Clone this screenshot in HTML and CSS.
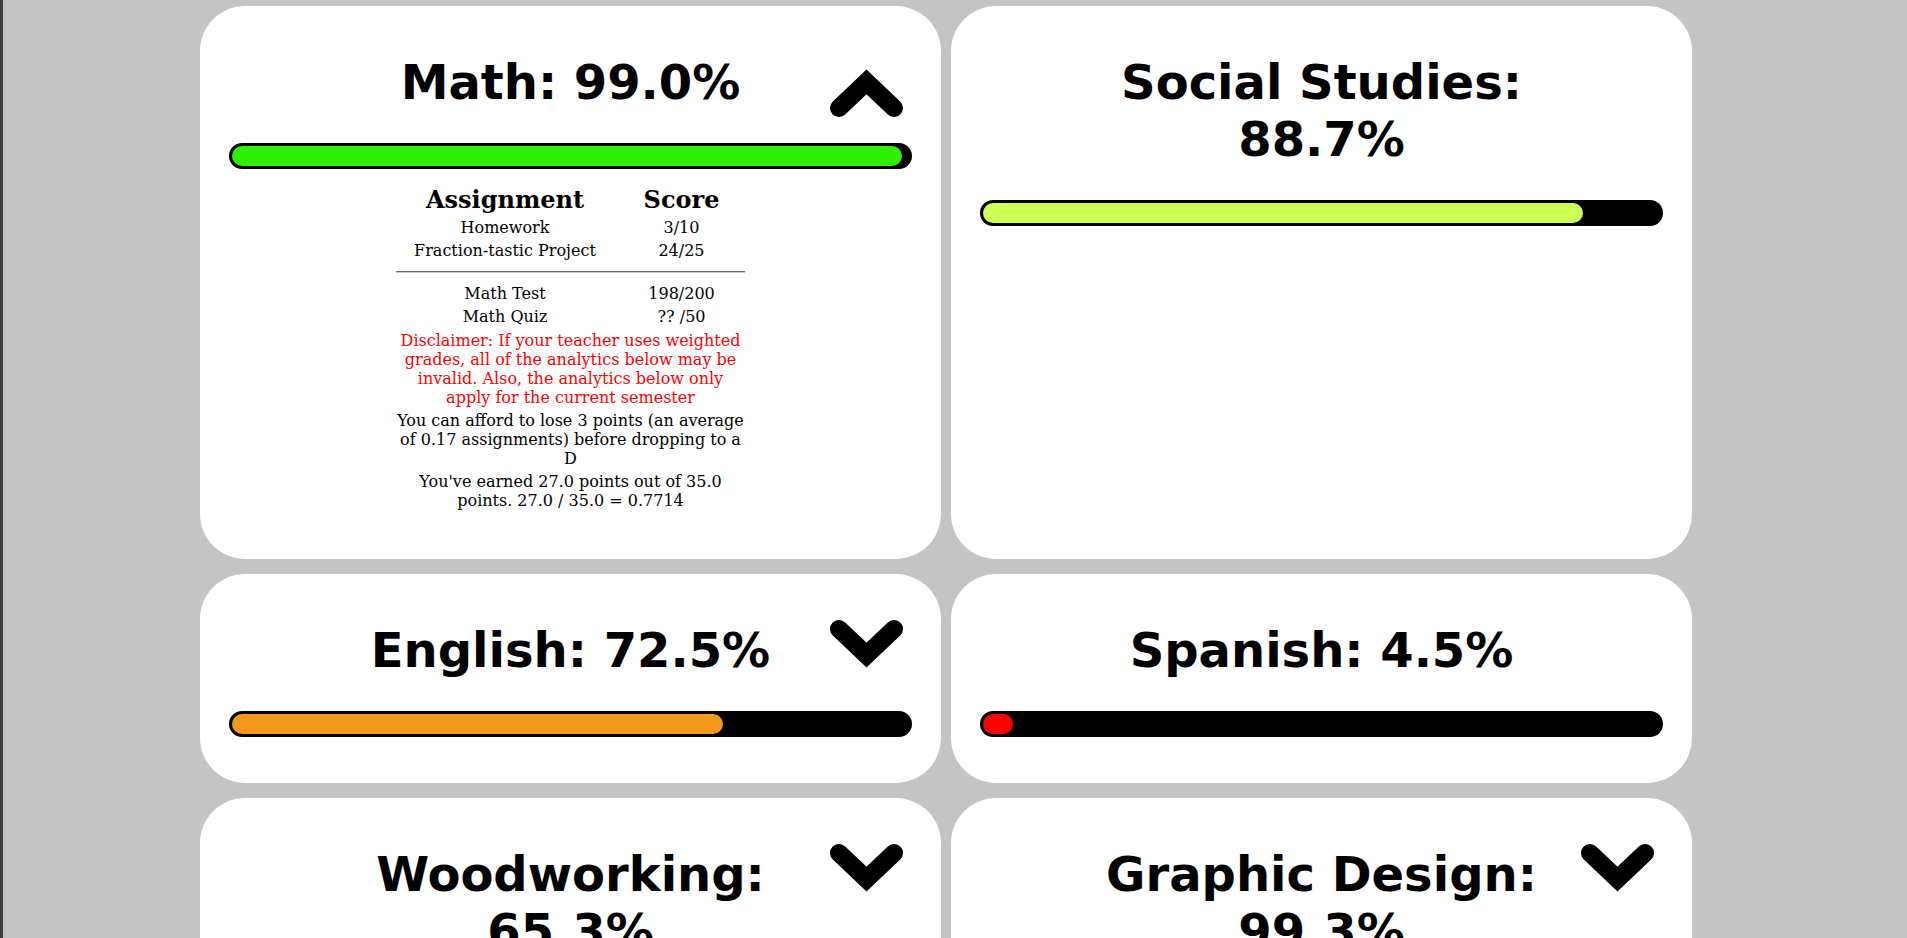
FILE: index.html
```html
<!DOCTYPE html>
<html lang="en">
<head>
<meta charset="utf-8">
<title>Grades</title>
<link rel="stylesheet" href="styles.css">
</head>
<body>
<main class="grid">
  <section class="card">
    <h1 class="title">Math: 99.0%</h1>
    <svg class="chev chev-up" viewBox="0 0 75 48" aria-hidden="true"><polyline points="10,39 37.5,13 65,39"/></svg>
    <div class="bar"><div class="fill" style="width:99%;background:#2ff000"></div></div>
    <div class="details">
      <table class="scores">
        <tr><th class="c1">Assignment</th><th class="c2">Score</th></tr>
        <tr><td>Homework</td><td>3/10</td></tr>
        <tr><td>Fraction-tastic Project</td><td>24/25</td></tr>
      </table>
      <hr class="sep">
      <table class="scores">
        <tr><td class="c1">Math Test</td><td class="c2">198/200</td></tr>
        <tr><td>Math Quiz</td><td>?? /50</td></tr>
      </table>
      <p class="disclaimer">Disclaimer: If your teacher uses weighted grades, all of the analytics below may be invalid. Also, the analytics below only apply for the current semester</p>
      <p class="note">You can afford to lose 3 points (an average of 0.17 assignments) before dropping to a D</p>
      <p class="note">You've earned 27.0 points out of 35.0 points. 27.0 / 35.0 = 0.7714</p>
    </div>
  </section>

  <section class="card">
    <h1 class="title">Social Studies: 88.7%</h1>
    <div class="bar"><div class="fill" style="width:88.7%;background:#ccff55"></div></div>
  </section>

  <section class="card">
    <h1 class="title">English: 72.5%</h1>
    <svg class="chev chev-down" viewBox="0 0 75 48" aria-hidden="true"><polyline points="10,9 37.5,35 65,9"/></svg>
    <div class="bar"><div class="fill" style="width:72.5%;background:#f4991e"></div></div>
  </section>

  <section class="card">
    <h1 class="title">Spanish: 4.5%</h1>
    <div class="bar"><div class="fill" style="width:4.5%;background:#ff0000"></div></div>
  </section>

  <section class="card">
    <h1 class="title">Woodworking: 65.3%</h1>
    <svg class="chev chev-down" viewBox="0 0 75 48" aria-hidden="true"><polyline points="10,9 37.5,35 65,9"/></svg>
    <div class="bar"><div class="fill" style="width:65.3%;background:#f7c12a"></div></div>
  </section>

  <section class="card">
    <h1 class="title">Graphic Design: 99.3%</h1>
    <svg class="chev chev-down" viewBox="0 0 75 48" aria-hidden="true"><polyline points="10,9 37.5,35 65,9"/></svg>
    <div class="bar"><div class="fill" style="width:99.3%;background:#2ff000"></div></div>
  </section>
</main>
</body>
</html>
```

FILE: styles.css
```css
html {
  border-left: 3px solid #3b3f43;
  background: #c4c4c4;
}

body {
  margin: 0;
  background: #c4c4c4;
  font-family: "DejaVu Serif", serif;
  font-size: 16px;
  color: #000;
  overflow: hidden;
}

.grid {
  display: grid;
  grid-template-columns: 741px 741px;
  column-gap: 10px;
  row-gap: 15px;
  margin: 6px 0 0 197px;
}

.card {
  position: relative;
  background: #fff;
  border-radius: 45px;
  padding: 16px 29px 46px;
}

.title {
  margin: 32px 100px;
  font-family: "DejaVu Sans", sans-serif;
  font-weight: bold;
  font-size: 48px;
  line-height: 57px;
  text-align: center;
}

.chev {
  position: absolute;
  right: 37px;
  width: 75px;
  height: 48px;
}

.chev polyline {
  fill: none;
  stroke: #000;
  stroke-width: 18;
  stroke-linecap: round;
  stroke-linejoin: miter;
}

.chev-down {
  top: 46px;
}

.chev-up {
  top: 63px;
}

.bar {
  background: #000;
  border-radius: 13px;
  padding: 3px;
  height: 20px;
}

.fill {
  height: 20px;
  border-radius: 10px;
}

.details {
  width: 355px;
  margin: 13px auto 3px;
  text-align: center;
}

.scores {
  table-layout: fixed;
  width: 355px;
  border-spacing: 2px;
}

.scores th,
.scores td {
  padding: 1px;
  text-align: center;
}

.scores th {
  font-size: 24px;
  font-weight: bold;
}

.c1 {
  width: 218px;
}

.c2 {
  width: 127px;
}

.sep {
  height: 0;
  margin: 8px 3px;
  border: none;
  border-top: 1px solid #6c6c6c;
  border-bottom: 1px solid #c9c9c9;
}

.disclaimer {
  margin: 2px 3px 0;
  color: #ff0000;
}

.note {
  margin: 4px 3px 0;
}
```
